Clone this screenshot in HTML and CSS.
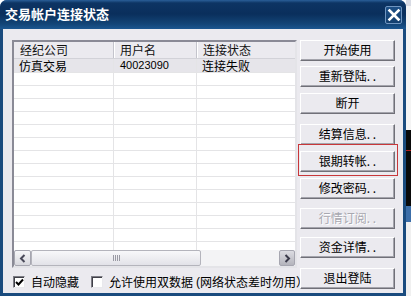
FILE: index.html
```html
<!DOCTYPE html>
<html lang="zh-CN">
<head>
<meta charset="utf-8">
<title>交易帐户连接状态</title>
<link rel="stylesheet" href="styles.css">
</head>
<body>
<div class="screen">
  <div class="dialog">
    <div class="titlebar">
      <span class="title">交易帐户连接状态</span>
      <div class="close">
        <svg width="14" height="14" viewBox="0 0 14 14"><path d="M2.5 2.5 L11.5 11.5 M11.5 2.5 L2.5 11.5" stroke="#fff" stroke-width="2.6" stroke-linecap="square"/></svg>
      </div>
    </div>
    <div class="client">
      <div class="leftcol">
        <div class="list">
          <div class="head">
            <div class="hc c1">经纪公司</div>
            <div class="hc c2">用户名</div>
            <div class="hc c3">连接状态</div>
          </div>
          <div class="rows">
            <div class="row sel"><div class="cell c1">仿真交易</div><div class="cell c2 num">40023090</div><div class="cell c3">连接失败</div></div>
            <div class="row"><div class="cell c1"></div><div class="cell c2"></div><div class="cell c3"></div></div>
            <div class="row"><div class="cell c1"></div><div class="cell c2"></div><div class="cell c3"></div></div>
            <div class="row"><div class="cell c1"></div><div class="cell c2"></div><div class="cell c3"></div></div>
            <div class="row"><div class="cell c1"></div><div class="cell c2"></div><div class="cell c3"></div></div>
            <div class="row"><div class="cell c1"></div><div class="cell c2"></div><div class="cell c3"></div></div>
            <div class="row"><div class="cell c1"></div><div class="cell c2"></div><div class="cell c3"></div></div>
            <div class="row"><div class="cell c1"></div><div class="cell c2"></div><div class="cell c3"></div></div>
            <div class="row"><div class="cell c1"></div><div class="cell c2"></div><div class="cell c3"></div></div>
            <div class="row"><div class="cell c1"></div><div class="cell c2"></div><div class="cell c3"></div></div>
            <div class="row"><div class="cell c1"></div><div class="cell c2"></div><div class="cell c3"></div></div>
            <div class="row"><div class="cell c1"></div><div class="cell c2"></div><div class="cell c3"></div></div>
            <div class="row"><div class="cell c1"></div><div class="cell c2"></div><div class="cell c3"></div></div>
            <div class="row"><div class="cell c1"></div><div class="cell c2"></div><div class="cell c3"></div></div>
            <div class="row"><div class="cell c1"></div><div class="cell c2"></div><div class="cell c3"></div></div>
          </div>
          <div class="hscroll">
            <div class="sbtn left"><svg width="8" height="9" viewBox="0 0 8 9"><path d="M5.5 1 L2 4.5 L5.5 8" fill="none" stroke="#4a4a5a" stroke-width="2"/></svg></div>
            <div class="thumb"><span class="grip"></span></div>
            <div class="track"></div>
            <div class="sbtn right"><svg width="8" height="9" viewBox="0 0 8 9"><path d="M2.5 1 L6 4.5 L2.5 8" fill="none" stroke="#3a3a4a" stroke-width="2"/></svg></div>
          </div>
        </div>
        <div class="opts">
          <label class="opt"><span class="cb"><svg width="9" height="9" viewBox="0 0 9 9"><path d="M1 4 L3.5 6.5 L8 1.5" fill="none" stroke="#000" stroke-width="2"/></svg></span>自动隐藏</label>
          <label class="opt opt2"><span class="cb"></span>允许使用双数据<span class="paren">(</span>网络状态差时勿用）</label>
        </div>
      </div>
      <div class="btncol">
        <div class="btn">开始使用</div>
        <div class="btn g5">重新登陆. .</div>
        <div class="btn">断开</div>
        <div class="btn g10">结算信息. .</div>
        <div class="btn hl">银期转帐. .<span class="mark"></span></div>
        <div class="btn">修改密码. .</div>
        <div class="btn g9 disabled">行情订阅. .</div>
        <div class="btn g8">资金详情. .</div>
        <div class="btn g10">退出登陆</div>
      </div>
    </div>
  </div>
  <div class="strip">
    <div class="s-top"></div>
    <div class="s-white"></div>
    <div class="s-black"><div class="s-red"></div></div>
    <div class="s-blue"></div>
    <div class="s-light"></div>
  </div>
</div>
</body>
</html>
```

FILE: styles.css
```css
* { box-sizing: border-box; }
html, body { margin: 0; padding: 0; }
body {
  width: 411px;
  height: 296px;
  overflow: hidden;
  font-family: "Liberation Sans", "Noto Sans CJK SC", sans-serif;
  font-size: 12px;
  color: #000;
  background: #fff;
}
.screen {
  display: flex;
  width: 411px;
  height: 296px;
}
.dialog {
  width: 406px;
  height: 296px;
  display: flex;
  flex-direction: column;
  background: #1a4b7e;
  border-radius: 7px 7px 0 0;
  padding: 0 3px 3px 3px;
  overflow: hidden;
}
.titlebar {
  height: 29px;
  flex: none;
  display: flex;
  align-items: center;
  justify-content: space-between;
  margin: 0 -3px;
  padding: 0 4px 0 5px;
  background: linear-gradient(#2a5f98 0px, #0d3463 3px, #0a2f5c 14px, #134577 24px, #1b5690 29px);
}
.title {
  color: #fff;
  font-family: "Noto Sans CJK SC", sans-serif;
  font-weight: bold;
  font-size: 13px;
  line-height: 16px;
  margin-top: -1px;
}
.close {
  width: 17px;
  height: 18px;
  border: 1px solid #6f95c0;
  border-radius: 2px;
  background: linear-gradient(#1c4f86, #14406f);
  display: flex;
  align-items: center;
  justify-content: center;
  margin-top: 1px;
}
.client {
  flex: 1;
  background: #ebeaef;
  display: flex;
  padding: 11px 8px 0 9px;
}
.leftcol {
  width: 285px;
  display: flex;
  flex-direction: column;
}
.list {
  height: 228px;
  display: flex;
  flex-direction: column;
  border-style: solid;
  border-width: 2px;
  border-color: #8a8a96 #e4e4e8 #e4e4e8 #8a8a96;
  background: #fff;
  overflow: hidden;
}
.head {
  display: flex;
  height: 17px;
  flex: none;
  background: #ebeaef;
  border-bottom: 1px solid #d2d2d8;
}
.hc {
  font-family: "Noto Sans CJK SC", sans-serif;
  font-size: 12px;
  line-height: 16px;
  padding-left: 6px;
  color: #111;
  border-right: 1px solid #c4c4cc;
  box-shadow: inset 1px 0 0 #fff;
}
.c1 { width: 100px; }
.c2 { width: 83px; }
.c3 { flex: 1; }
.hc.c1 { box-shadow: none; }
.hc.c3 { border-right: none; }
.rows {
  flex: 1;
  min-height: 0;
}
.row {
  display: flex;
  height: 13px;
  border-bottom: 1px solid #e4e4e6;
}
.row.sel {
  height: 14px;
  background: #e6e5ea;
}
.cell {
  font-family: "Noto Sans CJK SC", sans-serif;
  font-size: 12px;
  line-height: 13px;
  padding-left: 5px;
  border-right: 1px solid #e4e4e6;
  white-space: nowrap;
}
.cell.c3 { border-right: none; }
.cell.num {
  font-family: "Liberation Sans", sans-serif;
  font-size: 11px;
  padding-left: 6px;
}
.hscroll {
  position: relative;
  z-index: 1;
  height: 16px;
  flex: none;
  display: flex;
  background: #f3f3f5;
}
.sbtn {
  width: 17px;
  height: 16px;
  border: 1px solid #a6a6b0;
  border-radius: 2px;
  display: flex;
  align-items: center;
  justify-content: center;
}
.sbtn.left {
  background: linear-gradient(#f7f7f9, #d8d8de);
}
.sbtn.right {
  width: 16px;
  background: linear-gradient(#dcdce2, #b4b4bc);
}
.thumb {
  width: 170px;
  height: 16px;
  border: 1px solid #b4b4bc;
  border-radius: 2px;
  background: linear-gradient(#f8f8fa, #e2e2e8);
  display: flex;
  align-items: center;
  justify-content: center;
}
.grip {
  width: 7px;
  height: 6px;
  background: repeating-linear-gradient(90deg, #9a9aa4 0 1px, transparent 1px 2px);
}
.track {
  flex: 1;
}
.opts {
  display: flex;
  align-items: center;
  height: 22px;
  margin-top: 3px;
  white-space: nowrap;
}
.opt {
  display: flex;
  align-items: center;
  font-family: "Noto Sans CJK SC", sans-serif;
  font-size: 12px;
  line-height: 14px;
  padding-left: 1px;
}
.opt2 { margin-left: 11px; }
.paren { font-family: "Liberation Sans", sans-serif; margin-left: 3px; }
.cb {
  width: 12px;
  height: 12px;
  border-style: solid;
  border-width: 1px;
  border-color: #7c7c84 #e8e8ec #e8e8ec #7c7c84;
  box-shadow: inset 1px 1px 0 #404048;
  background: #fff;
  margin-right: 6px;
  display: flex;
  align-items: center;
  justify-content: center;
}
.btncol {
  margin-left: 3px;
  width: 95px;
  display: flex;
  flex-direction: column;
}
.btn {
  position: relative;
  height: 21px;
  margin-top: 6px;
  border-style: solid;
  border-width: 1px;
  border-color: #ffffff #707078 #707078 #ffffff;
  box-shadow: inset -1px -1px 0 #a4a4ac;
  background: #ebeaef;
  font-family: "Noto Sans CJK SC", sans-serif;
  font-size: 12px;
  line-height: 18px;
  text-align: center;
  color: #000;
  white-space: nowrap;
}
.btn:first-child { margin-top: 0; }
.g5 { margin-top: 5px; }
.g8 { margin-top: 8px; }
.g9 { margin-top: 9px; }
.g10 { margin-top: 10px; }
.btn.disabled {
  color: #a8a8b0;
  text-shadow: 1px 1px 0 #fff;
}
.mark {
  position: absolute;
  left: -3px;
  top: -8px;
  width: 100px;
  height: 32px;
  border: 1px solid #c8373a;
}
.strip {
  width: 5px;
  display: flex;
  flex-direction: column;
}
.s-top { height: 6px; background: #d8dbe4; }
.s-white { height: 124px; background: #f4f4f4; }
.s-black { height: 76px; background: #0a0a0a; padding-top: 20px; }
.s-red { height: 1px; background: #b02020; }
.s-blue { height: 16px; background: #3c6ea8; }
.s-light { flex: 1; background: #f0f0f0; }
```
